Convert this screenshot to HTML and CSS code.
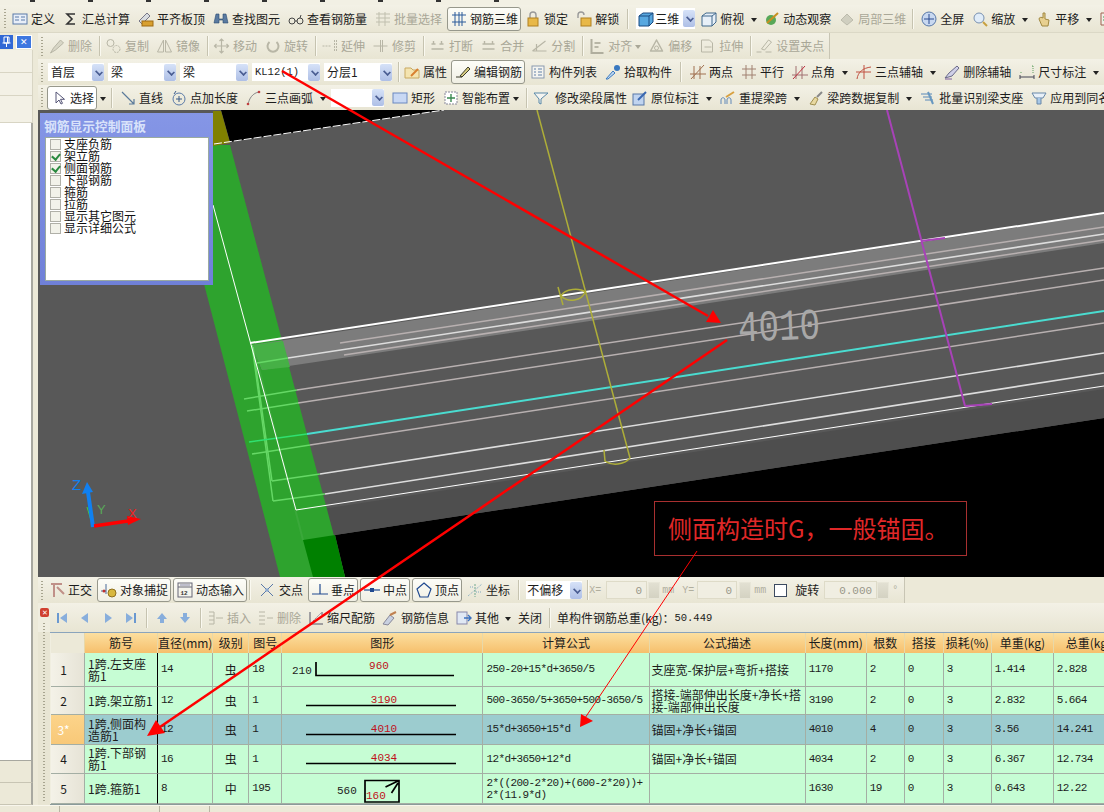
FILE: index.html
```html
<!DOCTYPE html>
<html lang="zh">
<head>
<meta charset="utf-8">
<title>钢筋三维</title>
<link rel="stylesheet" href="styles.css">
</head>
<body>
<div class="app">
  <div class="menu"></div>

  <div class="tb tb1">
    <span class="grip"></span>
    <span class="it"><svg class="i" viewBox="0 0 16 16"><rect x="1" y="3" width="14" height="10" fill="#e8eef8" stroke="#5a7aa8"/><path d="M3 6h4M3 9h4M9 6h4M9 9h4" stroke="#5a7aa8"/></svg>定义</span>
    <span class="it"><svg class="i" viewBox="0 0 16 16"><path d="M12 3H4l5 5-5 5h8" fill="none" stroke="#333" stroke-width="1.6"/></svg>汇总计算</span>
    <span class="it"><svg class="i" viewBox="0 0 16 16"><path d="M1 10l8-8 3 3-8 8z" fill="#d8dce0" stroke="#778"/><rect x="4" y="10" width="11" height="5" fill="#d8a030" stroke="#a06a10"/></svg>平齐板顶</span>
    <span class="it"><svg class="i" viewBox="0 0 16 16"><path d="M3 3h3v5h4V3h3l2 9h-5V9H6v3H1z" fill="#5a7aa0" stroke="#2a4a70" stroke-width=".6"/></svg>查找图元</span>
    <span class="it"><svg class="i" viewBox="0 0 16 16"><circle cx="4" cy="10" r="3" fill="none" stroke="#444"/><circle cx="12" cy="10" r="3" fill="none" stroke="#444"/><path d="M7 10h2M12 7l1-3" stroke="#444"/></svg>查看钢筋量</span>
    <span class="it off"><svg class="i" viewBox="0 0 16 16"><path d="M1 3h14M1 7h14M1 11h14M4 1v14M10 1v14" stroke="#c0bfae"/></svg>批量选择</span>
    <span class="it btn"><svg class="i" viewBox="0 0 16 16"><path d="M1 4h14M1 11h14M4 1v14M11 1v14M8 1v14" stroke="#2a5a9a" fill="none"/></svg>钢筋三维</span>
    <span class="it"><svg class="i" viewBox="0 0 16 16"><path d="M5 7V4a3 3 0 016 0v3" fill="none" stroke="#999" stroke-width="1.4"/><rect x="3" y="7" width="10" height="8" fill="#e8b848" stroke="#b08020"/></svg>锁定</span>
    <span class="it"><svg class="i" viewBox="0 0 16 16"><path d="M2 7V4a3 3 0 016 0" fill="none" stroke="#999" stroke-width="1.4"/><rect x="5" y="7" width="10" height="8" fill="#e8b848" stroke="#b08020"/></svg>解锁</span>
    <span class="sep"></span>
    <span class="combo c-view"><svg class="i" viewBox="0 0 16 16"><path d="M1 5l4-3h10v9l-4 4H1z" fill="#58a8e0" stroke="#1a4a80"/><path d="M1 5h10v10M11 5l4-3" fill="none" stroke="#1a4a80"/></svg><span class="ct">三维</span><span class="drop"></span></span>
    <span class="it nudge-2"><svg class="i" viewBox="0 0 16 16"><path d="M1 5l4-3h10v9l-4 4H1z" fill="#e8f0f8" stroke="#40688c"/><path d="M1 5h10v10M11 5l4-3" fill="none" stroke="#40688c"/></svg>俯视<span class="caret"></span></span>
    <span class="it nudge-1"><svg class="i" viewBox="0 0 16 16"><circle cx="7" cy="9" r="5" fill="#58a858"/><path d="M3 12L14 2" stroke="#c89020" stroke-width="2"/></svg>动态观察</span>
    <span class="it off"><svg class="i" viewBox="0 0 16 16"><path d="M2 9l6-6 6 6-6 5z" fill="#d0cfc0" stroke="#bcbbac"/></svg>局部三维</span>
    <span class="sep nudge-2"></span>
    <span class="it"><svg class="i" viewBox="0 0 16 16"><circle cx="8" cy="8" r="7" fill="#c8d8f0" stroke="#5878a8"/><path d="M8 3v10M3 8h10" stroke="#2a4a90"/></svg>全屏</span>
    <span class="it"><svg class="i" viewBox="0 0 16 16"><circle cx="7" cy="7" r="5" fill="#e0ecf8" stroke="#7890b0"/><path d="M11 11l4 4" stroke="#c8a040" stroke-width="2"/></svg>缩放<span class="caret"></span></span>
    <span class="it"><svg class="i" viewBox="0 0 16 16"><path d="M3 8c0-2 3-2 4-1V2h2v6l4 1-1 6H6z" fill="#e8d090" stroke="#a08840"/></svg>平移<span class="caret"></span></span>
    <span class="it"><svg class="i" viewBox="0 0 16 16"><path d="M1 2h8v12H1z" fill="#f0f0e8" stroke="#a06050"/><path d="M3 6h4M3 9h4" stroke="#3a9a50"/></svg></span>
  </div>

  <div class="body">
    <aside class="side">
      <div class="side-head">
        <span class="pin"><svg viewBox="0 0 13 14"><path d="M4 2h5v6H4zM2.500 8h8M6.500 8v4M7.500 2v6" fill="none" stroke="#fff"/></svg></span>
        <span class="close">&#x2715;</span>
      </div>
      <div class="side-row"></div>
      <div class="side-row"></div>
      <div class="side-row short"></div>
      <div class="side-white"></div>
      <div class="side-foot"></div>
      <div class="side-foot"></div>
    </aside>

    <main class="main">
      <div class="tb tb2">
        <span class="grip"></span>
        <span class="it off"><svg class="i" viewBox="0 0 16 16"><path d="M2 15l3-5 7-8 3 3-8 7z" fill="#d8d6c6" stroke="#b8b6a6"/></svg>删除</span>
        <span class="sep"></span>
        <span class="it off"><svg class="i" viewBox="0 0 16 16"><circle cx="5" cy="5" r="3.5" fill="none" stroke="#b8b6a6"/><circle cx="11" cy="11" r="3.5" fill="none" stroke="#b8b6a6" stroke-dasharray="2 1"/></svg>复制</span>
        <span class="it off"><svg class="i" viewBox="0 0 16 16"><path d="M7 2v12H1zM9 2v12h6z" fill="none" stroke="#b8b6a6"/></svg>镜像</span>
        <span class="sep"></span>
        <span class="it off"><svg class="i" viewBox="0 0 16 16"><path d="M8 1v14M1 8h14M6 3l2-2 2 2M6 13l2 2 2-2M3 6L1 8l2 2M13 6l2 2-2 2" fill="none" stroke="#b8b6a6" stroke-width="1.2"/></svg>移动</span>
        <span class="it off"><svg class="i" viewBox="0 0 16 16"><path d="M12 4a5.5 5.5 0 11-7 0" fill="none" stroke="#b8b6a6" stroke-width="2"/></svg>旋转</span>
        <span class="sep"></span>
        <span class="it off"><svg class="i" viewBox="0 0 16 16"><path d="M1 8h9M13 2v12M15 2v12" stroke="#b8b6a6" stroke-dasharray="2 1"/></svg>延伸</span>
        <span class="it off"><svg class="i" viewBox="0 0 16 16"><path d="M1 8h14M8 2v12M10 2v12" stroke="#b8b6a6"/></svg>修剪</span>
        <span class="sep"></span>
        <span class="it off"><svg class="i" viewBox="0 0 16 16"><path d="M2 6h4M10 6h4M2 11h12M4 3v3M12 3v3" stroke="#b8b6a6" stroke-width="1.4"/></svg>打断</span>
        <span class="it off"><svg class="i" viewBox="0 0 16 16"><path d="M2 6h12M2 11h12M4 3v3M12 3v3" stroke="#b8b6a6" stroke-width="1.4"/></svg>合并</span>
        <span class="it off"><svg class="i" viewBox="0 0 16 16"><path d="M1 13L14 3M1 13h14M5 6v7" fill="none" stroke="#b8b6a6" stroke-width="1.2"/></svg>分割</span>
        <span class="sep"></span>
        <span class="it off"><svg class="i" viewBox="0 0 16 16"><path d="M3 1v14h12" fill="none" stroke="#b0ae9e" stroke-width="2"/><path d="M6 5h6M6 9h4" stroke="#b8b6a6" stroke-width="2"/></svg>对齐<span class="caret small"></span></span>
        <span class="it off"><svg class="i" viewBox="0 0 16 16"><path d="M2 13l6-11 6 11z" fill="none" stroke="#b8b6a6" stroke-width="1.5" stroke-linejoin="round"/><circle cx="8" cy="10" r="2" fill="none" stroke="#b8b6a6"/></svg>偏移</span>
        <span class="it off"><svg class="i" viewBox="0 0 16 16"><path d="M2 2h8l3 3v9H2z" fill="none" stroke="#b8b6a6"/><path d="M5 9h7" stroke="#b8b6a6"/></svg>拉伸</span>
        <span class="sep"></span>
        <span class="it off"><svg class="i" viewBox="0 0 16 16"><path d="M5 11l7-9 3 2-7 8zM0 14h5M9 14h6" fill="none" stroke="#b8b6a6"/></svg>设置夹点</span>
      </div>

      <div class="tb tb3">
        <span class="grip"></span>
        <span class="combos">
          <span class="combo c-s"><span class="ct">首层</span><span class="drop"></span></span>
          <span class="combo"><span class="ct">梁</span><span class="drop"></span></span>
          <span class="combo"><span class="ct">梁</span><span class="drop"></span></span>
          <span class="combo"><span class="ct mono">KL12(1)</span><span class="drop"></span></span>
          <span class="combo"><span class="ct">分层1</span><span class="drop"></span></span>
        </span>
        <span class="sep"></span>
        <span class="it"><svg class="i" viewBox="0 0 16 16"><path d="M1 4h6l2 2h6v8H1z" fill="#f4e4b0" stroke="#c8a860"/><path d="M7 12l7-7" stroke="#d88030" stroke-width="2"/></svg>属性</span>
        <span class="it btn"><svg class="i" viewBox="0 0 16 16"><path d="M1 13h6M5 12l8-9 2 2-8 8z" fill="#d8cc80" stroke="#3a3a2a"/></svg>编辑钢筋</span>
        <span class="it"><svg class="i" viewBox="0 0 16 16"><rect x="2" y="2" width="12" height="12" fill="#f4f4f0" stroke="#8a9ab0"/><path d="M4 5h2M8 5h4M4 8h2M8 8h4M4 11h2M8 11h4" stroke="#6080a8"/></svg>构件列表</span>
        <span class="it"><svg class="i" viewBox="0 0 16 16"><path d="M1 15l7-8 2 2-7 6z" fill="#c0d8f0" stroke="#3878c0"/><circle cx="12" cy="4" r="3" fill="#3878c0"/></svg>拾取构件</span>
        <span class="sep"></span>
        <span class="it"><svg class="i" viewBox="0 0 16 16"><path d="M0 10h16M4 2v13M10 2v13M1 15L14 1" stroke="#a07050" fill="none"/></svg>两点</span>
        <span class="it"><svg class="i" viewBox="0 0 16 16"><path d="M1 5h14M1 11h14M5 1v14M11 1v14" stroke="#a08070" fill="none"/></svg>平行</span>
        <span class="it"><svg class="i" viewBox="0 0 16 16"><path d="M0 11h16M4 2v13M10 2v13" stroke="#a07070" fill="none"/><path d="M1 15L13 2" stroke="#c03040"/></svg>点角<span class="caret"></span></span>
        <span class="it"><svg class="i" viewBox="0 0 16 16"><path d="M1 15c1-7 6-11 14-12M0 8h15M8 1v14" stroke="#c05040" fill="none"/></svg>三点辅轴<span class="caret"></span></span>
        <span class="it"><svg class="i" viewBox="0 0 16 16"><path d="M1 14l4-5 8-7 2 2-7 8z" fill="#d0d0e8" stroke="#6a6a88"/><path d="M1 15h7" stroke="#8060a0"/></svg>删除辅轴</span>
        <span class="it"><svg class="i" viewBox="0 0 16 16"><path d="M1 13h14M1 11v4M15 11v4" stroke="#445" fill="none"/><path d="M2 9V7M14 9V2M13 2h2" stroke="#60a060" stroke-dasharray="1 1"/></svg>尺寸标注<span class="caret"></span></span>
      </div>

      <div class="tb tb4">
        <span class="grip"></span>
        <span class="it btn sel"><svg class="i" viewBox="0 0 16 16"><path d="M5 2v11l3-3 2 4 1.500-.7-2-4h4z" fill="#fff" stroke="#557"/></svg>选择</span><span class="caret solo"></span>
        <span class="sep"></span>
        <span class="it"><svg class="i" viewBox="0 0 16 16"><path d="M2 2l12 12M14 9v5H9" fill="none" stroke="#5a7a9a" stroke-width="1.200"/></svg>直线</span>
        <span class="it"><svg class="i" viewBox="0 0 16 16"><circle cx="8" cy="9" r="6" fill="none" stroke="#5a7aa8"/><path d="M8 6v6M5 9h6M3 4l2-3" stroke="#3a5a88"/></svg>点加长度</span>
        <span class="it"><svg class="i" viewBox="0 0 16 16"><path d="M2 15C3 8 7 3 13 2" fill="none" stroke="#888"/><circle cx="2" cy="14" r="1.300" fill="#c04040"/><circle cx="13" cy="2" r="1.300" fill="#c04040"/></svg>三点画弧<span class="caret"></span></span>
        <span class="combo c-blank nudge-3"><span class="ct"></span><span class="drop"></span></span>
        <span class="it"><svg class="i" viewBox="0 0 16 16"><rect x="1" y="3" width="14" height="10" fill="#c8d8f4" stroke="#6a88c0"/></svg>矩形</span>
        <span class="it"><svg class="i" viewBox="0 0 16 16"><rect x="2" y="2" width="12" height="12" fill="#fff" stroke="#889" stroke-dasharray="2 1"/><path d="M8 4v8M4 8h8" stroke="#3a8a50" stroke-width="1.400"/></svg>智能布置<span class="caret small"></span></span>
        <span class="sep nudge-1"></span>
        <span class="it nudge-2"><svg class="i" viewBox="0 0 16 16"><path d="M1 3h14L8 9v5l-2-1V9z" fill="#f4f4f0" stroke="#5888a8"/></svg><span class="push">修改梁段属性</span></span>
        <span class="it nudge-3"><svg class="i" viewBox="0 0 16 16"><rect x="1" y="4" width="11" height="11" fill="#c0d4f0" stroke="#5878a8"/><path d="M6 10l8-8" stroke="#3a68b0" stroke-width="2"/></svg>原位标注<span class="caret"></span></span>
        <span class="it"><svg class="i" viewBox="0 0 16 16"><path d="M1 14v-4c0-3 4-3 4 0v4M7 14v-4c0-3 4-3 4 0v4" fill="none" stroke="#6088b8"/><path d="M6 7l8-5" stroke="#d8a040" stroke-width="2"/></svg>重提梁跨<span class="caret"></span></span>
        <span class="it"><svg class="i" viewBox="0 0 16 16"><path d="M2 14l5-7 3 2-3 6z" fill="#e8d8a0" stroke="#a09050"/><path d="M9 7l5-5" stroke="#888" stroke-width="2"/></svg>梁跨数据复制<span class="caret"></span></span>
        <span class="it"><svg class="i" viewBox="0 0 16 16"><path d="M1 4h11M3 7h9M5 10h8" stroke="#5888b8"/><path d="M8 2l5 12" stroke="#6898c0" stroke-width="2"/></svg>批量识别梁支座</span>
        <span class="it"><svg class="i" viewBox="0 0 16 16"><path d="M1 3h14l-3 5H4z" fill="#e8f0f8" stroke="#6888a8"/><path d="M6 8v6h4V8" fill="#a8c8e8" stroke="#6888a8"/></svg>应用到同名</span>
      </div>

      <div class="view">
        <svg class="scene" viewBox="38 110 1066 467" preserveAspectRatio="none">
          <rect x="38" y="110" width="1066" height="467" fill="#585858"/>
          <polygon points="221,110 444,110 230,142" fill="#000"/>
          <polygon points="335,535 1104,418 1104,577 345,577" fill="#000"/>
          <polygon points="296,513 1104,389 1104,418 335,535" fill="#4e4e4e"/>
          <polygon points="168,145 230,145 345,577 280,577" fill="#2ea32e"/>
          <polygon points="213,111 221,111 230,143 213,146" fill="#808000"/>
          <polygon points="303,540 335,535 345,577 313,577" fill="#008000"/>
          <path d="M253 345L303 540" stroke="#3aa83a" stroke-width="2"/>
          <polygon points="252,345 1104,214 1104,243 650,312 262,370" fill="#7c7c7c"/>
          <polygon points="252,345 283,341 290,367 262,370" fill="#46b046"/>
          <path class="dash" d="M214 144L444 110"/>
          <path class="wh2" d="M250 343L1104 213"/>
          <g class="pk">
            <path d="M340 343L1104 227"/><path d="M344 355L1104 240"/>
            <path d="M297 390L1104 268"/><path d="M298 403L1104 280"/>
            <path d="M310 445L1104 323"/>
          </g>
          <path class="wh15" d="M288 358L1104 234"/>
          <path class="wh15" d="M320 474L1104 353"/>
          <path class="wh15" d="M325 494L1104 373"/>
          <path class="cy" d="M307 434L1104 311"/>
          <g class="gr">
            <path d="M257 363L288 358"/><path d="M244 399L297 390"/><path d="M247 411L298 403"/>
            <path d="M252 454L310 445"/><path d="M272 481L320 474"/><path d="M273 501L325 494"/>
            <path d="M252 345L273 501"/><path d="M253 347L272 481"/>
          </g>
          <path d="M249 442L307 434" stroke="#30e070" stroke-width="1.500"/>
          <path class="wh1" d="M296 510L1104 386"/>
          <path class="wh1" d="M213 205L296 510"/>
          <g class="yl">
            <path d="M537 110L630 458"/>
            <path d="M604 450L605 461C612 466 624 465 630 458"/>
            <path d="M558 287L563 305M561 296C565 288 580 288 585 292C582 301 568 303 561 296"/>
          </g>
          <g class="mg">
            <path d="M887 110L965 406"/><path d="M921 241L945 238"/><path d="M965 406L992 404"/>
          </g>
          <text class="bignum" x="738" y="340" textLength="82" lengthAdjust="spacingAndGlyphs" transform="rotate(-2 780 326)">4010</text>
          <path d="M93 527L87 507" stroke="#40d040"/>
          <path d="M93 527L88 492" stroke="#1080f0" stroke-width="4"/>
          <polygon points="87,482 82,494 93,492" fill="#1080f0"/>
          <path d="M94 526L128 521" stroke="#f00" stroke-width="3.500"/>
          <polygon points="141,519 127,516 128,525" fill="#f00"/>
          <text class="ax axz" x="72" y="490">Z</text>
          <text class="ax axy" x="97" y="514">Y</text>
          <text class="ax axx" x="128" y="518">X</text>
        </svg>

        <section class="ctl">
          <h2 class="ctl-title">钢筋显示控制面板</h2>
          <div class="ctl-body">
            <label class="ck"><span class="box"></span>支座负筋</label>
            <label class="ck"><span class="box on"></span>架立筋</label>
            <label class="ck"><span class="box on"></span>侧面钢筋</label>
            <label class="ck"><span class="box"></span>下部钢筋</label>
            <label class="ck"><span class="box"></span>箍筋</label>
            <label class="ck"><span class="box"></span>拉筋</label>
            <label class="ck"><span class="box"></span>显示其它图元</label>
            <label class="ck"><span class="box"></span>显示详细公式</label>
          </div>
        </section>
      </div>

      <div class="tb tb5">
        <span class="grip"></span>
        <span class="it"><svg class="i" viewBox="0 0 16 16"><path d="M2 2h11M5 2v13M8 5l7 7" stroke="#c09088" stroke-width="2" fill="none"/></svg>正交</span>
        <span class="it btn"><svg class="i" viewBox="0 0 16 16"><path d="M0 9h5M5 2v10" stroke="#4a6a9a"/><circle cx="11" cy="11" r="4" fill="#d8b840" stroke="#907020"/><circle cx="3" cy="9" r="1.500" fill="#c03030"/></svg>对象捕捉</span>
        <span class="it btn"><svg class="i" viewBox="0 0 16 16"><rect x="1" y="1" width="14" height="14" fill="#f4f4ec" stroke="#667"/><path d="M1 5h14" stroke="#667"/><path d="M3 3h10" stroke="#88a"/><text class="tiny" x="3.500" y="13">12</text></svg>动态输入</span>
        <span class="sep nudge-3"></span>
        <span class="it w18"><svg class="i" viewBox="0 0 16 16"><path d="M2 2l12 12M14 2L2 14" stroke="#5878a8"/><circle cx="8" cy="8" r="1.800" fill="#8aa8d0"/></svg>交点</span>
        <span class="it btn"><svg class="i" viewBox="0 0 16 16"><path d="M0 12h16M8 2v10" stroke="#204a90" stroke-width="1.200"/></svg>垂点</span>
        <span class="it btn"><svg class="i" viewBox="0 0 16 16"><path d="M0 8h16" stroke="#204a90" stroke-width="1.200"/><rect x="6" y="6" width="4" height="4" fill="#204a90"/></svg>中点</span>
        <span class="it btn"><svg class="i" viewBox="0 0 16 16"><path d="M8 1l7 6-3 8H4L1 7z" fill="none" stroke="#204a90" stroke-width="1.200"/></svg>顶点</span>
        <span class="it"><svg class="i" viewBox="0 0 16 16"><path d="M1 14L15 2M3 5h4M9 10h5" stroke="#80a8c0" stroke-dasharray="1 1"/><path d="M8 2v13" stroke="#70a890" stroke-dasharray="2 1"/></svg>坐标</span>
        <span class="sep"></span>
        <span class="combo c-s offset"><span class="ct">不偏移</span><span class="drop"></span></span>
        <span class="sep nudge-3 tail"></span>
        <span class="fields">
          <span class="lbl xy">X=</span><span class="num n1">0</span><span class="spin"></span><span class="lbl u">mm</span>
          <span class="lbl xy second">Y=</span><span class="num n1b">0</span><span class="spin s2b"></span><span class="lbl u u2">mm</span>
          <span class="cb"></span><span class="rot">旋转</span>
          <span class="num n2">0.000</span><span class="spin s3b"></span><span class="lbl deg">°</span>
        </span>
      </div>

      <div class="panel">
        <div class="strip"><span class="redx">&#x2715;</span></div>
        <div class="pane">
          <div class="tb tb6">
            <svg class="nav" viewBox="0 0 16 16"><path d="M4 3v10" stroke="#6a98d0" stroke-width="2"/><path d="M13 3L6 8l7 5z" fill="#88aedc"/></svg>
            <svg class="nav" viewBox="0 0 16 16"><path d="M11 3L4 8l7 5z" fill="#88aedc"/></svg>
            <svg class="nav" viewBox="0 0 16 16"><path d="M5 3l7 5-7 5z" fill="#88aedc"/></svg>
            <svg class="nav" viewBox="0 0 16 16"><path d="M12 3v10" stroke="#6a98d0" stroke-width="2"/><path d="M3 3l7 5-7 5z" fill="#88aedc"/></svg>
            <span class="sep"></span>
            <svg class="nav" viewBox="0 0 16 16"><path d="M8 3l5 6h-3v4H6V9H3z" fill="#88aedc"/></svg>
            <svg class="nav" viewBox="0 0 16 16"><path d="M8 13l5-6h-3V3H6v4H3z" fill="#88aedc"/></svg>
            <span class="sep"></span>
            <span class="it off"><svg class="i" viewBox="0 0 16 16"><path d="M1 2h5v12H1M1 6h5M1 10h5M8 8h7" fill="none" stroke="#b8b6a6"/></svg>插入</span>
            <span class="it off"><svg class="i" viewBox="0 0 16 16"><path d="M1 2h6M1 6h6M1 10h6M1 14h6M9 8h6" stroke="#b8b6a6"/></svg>删除</span>
            <span class="it"><svg class="i" viewBox="0 0 16 16"><path d="M2 14V2M14 2v3M2 14h13" stroke="#556" fill="none"/><path d="M5 11l8-8" stroke="#889" stroke-dasharray="2 1"/></svg>缩尺配筋</span>
            <span class="it"><svg class="i" viewBox="0 0 16 16"><path d="M1 14l7-9 4 3-6 7z" fill="#c8d0e0" stroke="#889"/><path d="M8 5l6-3" stroke="#c08050" stroke-width="2"/></svg>钢筋信息</span>
            <span class="it"><svg class="i" viewBox="0 0 16 16"><rect x="1" y="2" width="10" height="12" fill="#e0e8f4" stroke="#88a"/><path d="M8 8h7M12 5l3 3-3 3" fill="none" stroke="#3a70c0" stroke-width="1.400"/></svg>其他<span class="caret small"></span></span>
            <span class="it">关闭</span>
            <span class="sep"></span>
            <span class="it total">单构件钢筋总重(kg)：<span class="mono">50.449</span></span>
          </div>

          <div class="grid-wrap">
            <table class="grid">
              <colgroup>
                <col class="c0"><col class="c1"><col class="c2"><col class="c3"><col class="c4"><col class="c5"><col class="c6"><col class="c7"><col class="c8"><col class="c9"><col class="c10"><col class="c11"><col class="c12"><col class="c13">
              </colgroup>
              <thead>
                <tr><th class="corner"></th><th>筋号</th><th>直径(mm)</th><th>级别</th><th>图号</th><th>图形</th><th>计算公式</th><th>公式描述</th><th>长度(mm)</th><th>根数</th><th>搭接</th><th>损耗(%)</th><th>单重(kg)</th><th>总重(kg)</th></tr>
              </thead>
              <tbody>
                <tr class="r1">
                  <th class="rh">1</th><td class="name line">1跨.左支座<br>筋1</td><td class="n">14</td><td class="ctr">虫</td><td class="n">18</td>
                  <td class="shape"><svg viewBox="282 653 200 33"><text class="sn" x="292" y="674">210</text><path class="bar" d="M316 662V675.500H454"/><text class="sr" x="379" y="669">960</text></svg></td>
                  <td class="n">250-20+15*d+3650/5</td><td>支座宽-保护层+弯折+搭接</td><td class="n">1170</td><td class="n">2</td><td class="n">0</td><td class="n">3</td><td class="n">1.414</td><td class="n">2.828</td>
                </tr>
                <tr class="r2">
                  <th class="rh">2</th><td class="name line">1跨.架立筋1</td><td class="n">12</td><td class="ctr">虫</td><td class="n">1</td>
                  <td class="shape"><svg viewBox="282 687 200 27"><path class="bar" d="M306 705.500H456"/><text class="sr" x="384" y="703">3190</text></svg></td>
                  <td class="n">500-3650/5+3650+500-3650/5</td><td>搭接-端部伸出长度+净长+搭<br>接-端部伸出长度</td><td class="n">3190</td><td class="n">2</td><td class="n">0</td><td class="n">3</td><td class="n">2.832</td><td class="n">5.664</td>
                </tr>
                <tr class="r3 cur">
                  <th class="rh">3*</th><td class="name line">1跨.侧面构<br>造筋1</td><td class="n">12</td><td class="ctr">虫</td><td class="n">1</td>
                  <td class="shape"><svg viewBox="282 715 200 29"><path class="bar" d="M306 734.500H456"/><text class="sr" x="384" y="732">4010</text></svg></td>
                  <td class="n">15*d+3650+15*d</td><td>锚固+净长+锚固</td><td class="n">4010</td><td class="n">4</td><td class="n">0</td><td class="n">3</td><td class="n">3.56</td><td class="n">14.241</td>
                </tr>
                <tr class="r4">
                  <th class="rh">4</th><td class="name line">1跨.下部钢<br>筋1</td><td class="n">16</td><td class="ctr">虫</td><td class="n">1</td>
                  <td class="shape"><svg viewBox="282 745 200 28"><path class="bar" d="M306 763.500H456"/><text class="sr" x="384" y="761">4034</text></svg></td>
                  <td class="n">12*d+3650+12*d</td><td>锚固+净长+锚固</td><td class="n">4034</td><td class="n">2</td><td class="n">0</td><td class="n">3</td><td class="n">6.367</td><td class="n">12.734</td>
                </tr>
                <tr class="r5">
                  <th class="rh">5</th><td class="name line">1跨.箍筋1</td><td class="n">8</td><td class="ctr">中</td><td class="n">195</td>
                  <td class="shape"><svg viewBox="282 774 200 29"><text class="sn" x="337" y="794">560</text><path class="bar" d="M365 780.500H399V802H365ZM385.500 787L398 781M398 783L391.500 793"/><text class="srl" x="366" y="799">160</text></svg></td>
                  <td class="n f2">2*((200-2*20)+(600-2*20))+<br>2*(11.9*d)</td><td></td><td class="n">1630</td><td class="n">19</td><td class="n">0</td><td class="n">3</td><td class="n">0.643</td><td class="n">12.22</td>
                </tr>
              </tbody>
            </table>
          </div>
        </div>
      </div>
    </main>
  </div>

  <footer class="status"><span class="s1"></span><span class="s2"></span><span class="s3"></span></footer>

  <div class="note">侧面构造时G，一般锚固。</div>

  <svg class="marks" viewBox="0 0 1104 812">
    <path class="m3" d="M282 71L708 316"/>
    <polygon class="mf" points="721,323 706,322 713,310"/>
    <path class="m3" d="M727 340L160 727"/>
    <polygon class="mf" points="147,736 156,720 165,733"/>
    <path class="m1" d="M697 551L585 718"/>
    <polygon class="mf" points="580,727 581,714 593,721"/>
  </svg>
</div>
</body>
</html>
```

FILE: styles.css
```css
* { box-sizing: border-box; }
html, body { margin: 0; padding: 0; }
body {
  width: 1104px; height: 812px; overflow: hidden;
  font: 12px/1 "Noto Sans CJK SC", "Liberation Sans", sans-serif;
  color: #1c1c1c; background: #ece9d8;
}
.app { position: relative; width: 1104px; height: 812px; display: flex; flex-direction: column; overflow: hidden; }
.menu {
  height: 5px; flex: none;
  background:
    repeating-linear-gradient(90deg, #333 0 5px, transparent 5px 58px) 30px 0 / 480px 2px no-repeat,
    #f2f0e4;
}

/* toolbars */
.tb { display: flex; align-items: center; gap: 8px; flex: none; white-space: nowrap; overflow: hidden; background: linear-gradient(#f3f1e6, #e8e5d3); }
.tb1 { height: 28px; padding-left: 4px; border-bottom: 1px solid #dbd8c6; }
.tb2 { height: 26px; padding-left: 3px; gap: 7px; width: 792px; border-right: 1px solid #c8c5b4; }
.tb3 { height: 26px; padding-left: 3px; }
.tb4 { height: 25px; padding-left: 3px; }
.tb5 { height: 26px; padding-left: 3px; width: 867px; border-right: 1px solid #c8c5b4; }
.tb6 { height: 29px; padding-left: 4px; gap: 7px; }
.tb1 .grip { margin-right: -2px; }
.tb2 .grip { margin-right: -2px; }
.tb4 .grip { margin-right: -1px; }
.tb5 .grip { margin-right: -2px; }

.grip { width: 2px; height: 19px; flex: none; background: repeating-linear-gradient(#a8a590 0 1px, transparent 1px 3px); }
.it { display: inline-flex; align-items: center; flex: none; height: 22px; }
.i { width: 16px; height: 16px; margin-right: 3px; flex: none; display: block; }
.tb2 .i { width: 17px; }
.w18 .i { width: 18px; }
.off { color: #a9a797; }
.sep { width: 1px; height: 20px; flex: none; background: #c6c3b0; box-shadow: 1px 0 #faf9f0; }
.tb2 .sep { margin-right: -2px; }
.tb3 .sep { margin: 0 -3px 0 -2px; }
.tb3 .sep:nth-of-type(n+4) { margin: 0 1px 0 0; }
.tb5 .tail { margin-right: -7px; }
.caret { width: 0; height: 0; margin: 2px 0 0 7px; border: 3.500px solid transparent; border-top: 4px solid #222; border-bottom: 0; }
.caret.small { margin-left: 3px; }
.tb6 .caret.small { margin-left: 6px; }
.caret.solo { margin: 2px -3px 0 -5px; }
.off .caret { border-top-color: #a9a797; }
.btn { height: 24px; padding: 0 2px 0 3px; margin: 0 -4px 0 -3px; background: linear-gradient(#fdfdf8, #f0efe4); border: 1px solid #97988c; border-radius: 3px; }
.tb5 .btn { margin: 0 -3px; }
.tb3 .btn { margin: 0 -3px 0 -4px; }
.sel { padding-left: 3px; width: 50px; background: #fff; margin-right: 0; }
.nudge-1 { margin-left: -1px; }
.nudge-2 { margin-left: -2px; }
.nudge-3 { margin-left: -3px; }
.push { margin-left: 3px; }

.combos { display: flex; gap: 4px; margin-left: -3px; }
.combo { display: inline-flex; align-items: center; flex: none; width: 68px; height: 18px; background: #fff; padding-left: 3px; }
.c-s { width: 56px; }
.c-view { width: 59px; height: 21px; padding-left: 2px; }
.c-view .i { margin-right: 1px; }
.c-blank { width: 53px; }
.offset { margin-left: -1px; padding-left: 1px; }
.ct { flex: 1; min-width: 0; }
.mono { font: 10.500px "Liberation Mono", monospace; }
.drop { position: relative; width: 12px; height: 17px; flex: none; background: linear-gradient(#d6e2f8, #aebfe6); border-radius: 2px; }
.drop::after { content: ""; position: absolute; left: 3px; top: 5px; width: 6px; height: 4px; border: solid #4a5d92; border-width: 0 2px 2px 0; transform: rotate(45deg) scale(.8); }

.body { flex: 1; display: flex; min-height: 0; }
.side { width: 38px; flex: none; display: flex; flex-direction: column; padding-right: 5px; }
.side-head { height: 17px; flex: none; display: flex; align-items: center; gap: 3px; background: #ece9d8; }
.pin { width: 13px; height: 14px; flex: none; background: #3168d5; }
.pin svg { display: block; width: 13px; height: 14px; }
.close { width: 16px; height: 14px; background: #3d77e0; color: #fff; border: 1px solid #fff; font-size: 9px; line-height: 12px; text-align: center; }
.side-row { height: 23px; flex: none; background: #f3f1e6; border: 1px solid #d8d5c4; border-width: 0 1px 1px 0; }
.side-row.short { height: 27px; }
.side-white { flex: 1; background: #fff; border-right: 2px solid #a8a8a0; border-bottom: 1px solid #a8a8a0; }
.side-foot { height: 22px; flex: none; background: #ece9d8; border-right: 2px solid #a8a8a0; border-bottom: 1px solid #c8c5b4; }
.main { flex: 1; min-width: 0; display: flex; flex-direction: column; }

/* 3D view */
.view { position: relative; height: 467px; flex: none; background: #585858; overflow: hidden; }
.scene { display: block; width: 1066px; height: 467px; }
.scene path { fill: none; }
.dash { stroke: #fff; stroke-width: 1; stroke-dasharray: 8 2; }
.wh2 { stroke: #fff; stroke-width: 2; }
.wh15 { stroke: #ddd; stroke-width: 1.600; }
.wh1 { stroke: #fff; stroke-width: 1; }
.pk { stroke: #b8b0b0; stroke-width: 1.500; }
.cy { stroke: #4adcd0; stroke-width: 2; }
.gr { stroke: #66d866; stroke-width: 1.500; }
.yl { stroke: #aeae38; stroke-width: 1.500; }
.mg { stroke: #a842b8; stroke-width: 2; }
.bignum { font: 44px "Liberation Mono", monospace; fill: #a8a8a8; }
.ax { font: 15px "Liberation Sans", sans-serif; }
.axz { fill: #1080f0; }
.axy { fill: #58a858; font-size: 13px; }
.axx { fill: #f02020; font-size: 13px; }
.tiny { font: 700 6px "Liberation Mono", monospace; fill: #333; }

.ctl { position: absolute; left: 2px; top: 3px; width: 173px; height: 172px; background: linear-gradient(#8596e6, #6f80d8); padding: 0 4px 4px 5px; }
.ctl-title { margin: 0 0 0 -1px; height: 24px; padding: 6px 0 0 0; font: 700 12.750px/14px "Noto Sans CJK SC", sans-serif; color: #d8e2fa; white-space: nowrap; }
.ctl-body { height: 144px; background: #fff; border: 1px solid #9aaaa0; padding: 0 0 0 4px; }
.ck { display: flex; align-items: center; height: 12px; line-height: 12px; color: #111; }
.box { width: 11px; height: 11px; margin-right: 3px; flex: none; background: #f2f2ea; border: 1px solid #b0b0a8; position: relative; }
.box.on::after { content: ""; position: absolute; left: 2px; top: 0; width: 4px; height: 6px; border: solid #2a8a40; border-width: 0 2px 2px 0; transform: rotate(40deg); }

/* snap bar fields */
.fields { display: flex; align-items: center; }
.lbl { font: 10px "Liberation Mono", monospace; color: #b0ae9e; flex: none; }
.xy { width: 17px; }
.xy.second { width: 15px; margin-left: 5px; }
.u { width: 15px; margin-left: 2px; }
.u2 { margin-left: 3px; }
.deg { margin-left: 3px; }
.num { height: 18px; flex: none; background: #f0eee2; border: 1px solid #dedbc8; text-align: right; padding: 3px 4px 0 0; font: 11px "Liberation Mono", monospace; color: #999789; }
.n1 { width: 41px; }
.n1b { width: 40px; }
.n2 { width: 53px; }
.spin { width: 12px; height: 17px; flex: none; margin-left: 1px; background: linear-gradient(#e2e0d2, #d4d2c2); border: 1px solid #e8e6d8; }
.s2b { margin-left: 2px; }
.s3b { margin-left: 0; }
.cb { width: 13px; height: 13px; flex: none; margin-left: 5px; background: #fff; border: 1px solid #3c4a60; }
.rot { margin: 0 5px 0 8px; }

/* bottom panel */
.panel { flex: 1; display: flex; min-height: 0; }
.strip { width: 12px; flex: none; position: relative; background: linear-gradient(#efeddf 0 29px, #e8e5d3 29px); }
.strip::after { content: ""; position: absolute; left: 5px; top: 20px; bottom: 2px; width: 2px; background: repeating-linear-gradient(#a8a590 0 1px, transparent 1px 3px); }
.redx { position: absolute; left: 2px; top: 5px; width: 9px; height: 9px; background: #d04030; border-radius: 2px; color: #fff; font-size: 7px; line-height: 9px; text-align: center; }
.pane { flex: 1; min-width: 0; display: flex; flex-direction: column; }
.nav { width: 16px; height: 16px; flex: none; }
.grid-wrap { flex: 1; overflow: hidden; border-top: 1px solid #8aa4bc; padding-left: 1px; border-bottom: 1px solid #8a9a9a; background: #f0eee0; }
.grid { border-collapse: separate; border-spacing: 0; table-layout: fixed; width: 1073px; }
.c0 { width: 34px; } .c1 { width: 73px; } .c2 { width: 55px; } .c3 { width: 36px; } .c4 { width: 33px; } .c5 { width: 201px; } .c6 { width: 166px; } .c7 { width: 156px; } .c8 { width: 61px; } .c9 { width: 38px; } .c10 { width: 39px; } .c11 { width: 48px; } .c12 { width: 62px; } .c13 { width: 70px; }
.grid th, .grid td { padding: 0 0 0 2px; border-right: 1px solid #a4aea4; border-bottom: 1px solid #a4aea4; overflow: hidden; white-space: nowrap; font-weight: 400; vertical-align: middle; }
.grid thead th { height: 20px; padding: 0; text-align: center; background: linear-gradient(#fcdf9f, #f6bf6c); border-right-color: #e8d8a8; border-bottom: 0; }
.grid thead th.corner { background: #ece9d8; }
.grid td { background: #c6fdd4; line-height: 12px; }
.grid .rh { text-align: center; padding: 0 8px 0 0; background: linear-gradient(90deg, #f4f2e8, #e6e3d6); }
.r1 > * { height: 34px; } .r2 > * { height: 28px; } .r3 > * { height: 30px; } .r4 > * { height: 29px; } .r5 > * { height: 30px; }
.grid .cur td { background: #9ccccf; }
.grid .cur .rh { background: linear-gradient(#fcd48a, #f8c878); color: #fff; }
.grid .line { border-right: 1px solid #000; padding-left: 3px; }
.grid .n { font: 11px/13px "Liberation Mono", monospace; letter-spacing: -.6px; padding-left: 3px; }
.grid .f2 { line-height: 12px; }
.grid .ctr { text-align: center; padding: 0; }
.grid .shape { padding: 0; }
.shape svg { display: block; width: 200px; height: 100%; overflow: visible; }
.bar { fill: none; stroke: #000; stroke-width: 1.700; }
.sn { font: 11px "Liberation Mono", monospace; fill: #222; }
.sr { font: 11px "Liberation Mono", monospace; fill: #c01020; text-anchor: middle; }
.srl { font: 11px "Liberation Mono", monospace; fill: #c01020; }

.status { height: 7px; flex: none; display: flex; background: #ece9d8; border-top: 1px solid #f8f6ec; }
.status span { border-right: 1px solid #b8b5a4; height: 100%; }
.s1 { width: 60px; } .s2 { width: 100px; } .s3 { width: 50px; }

.note { position: absolute; left: 654px; top: 501px; width: 313px; height: 55px; border: 1px solid #a83030; color: #e02828; font-size: 24px; line-height: 51px; padding-left: 13px; white-space: nowrap; }
.marks { position: absolute; left: 0; top: 0; width: 1104px; height: 812px; pointer-events: none; }
.m3 { stroke: #f00; stroke-width: 2.500; fill: none; }
.m1 { stroke: #f00; stroke-width: 1; fill: none; }
.mf { fill: #f00; }
```
